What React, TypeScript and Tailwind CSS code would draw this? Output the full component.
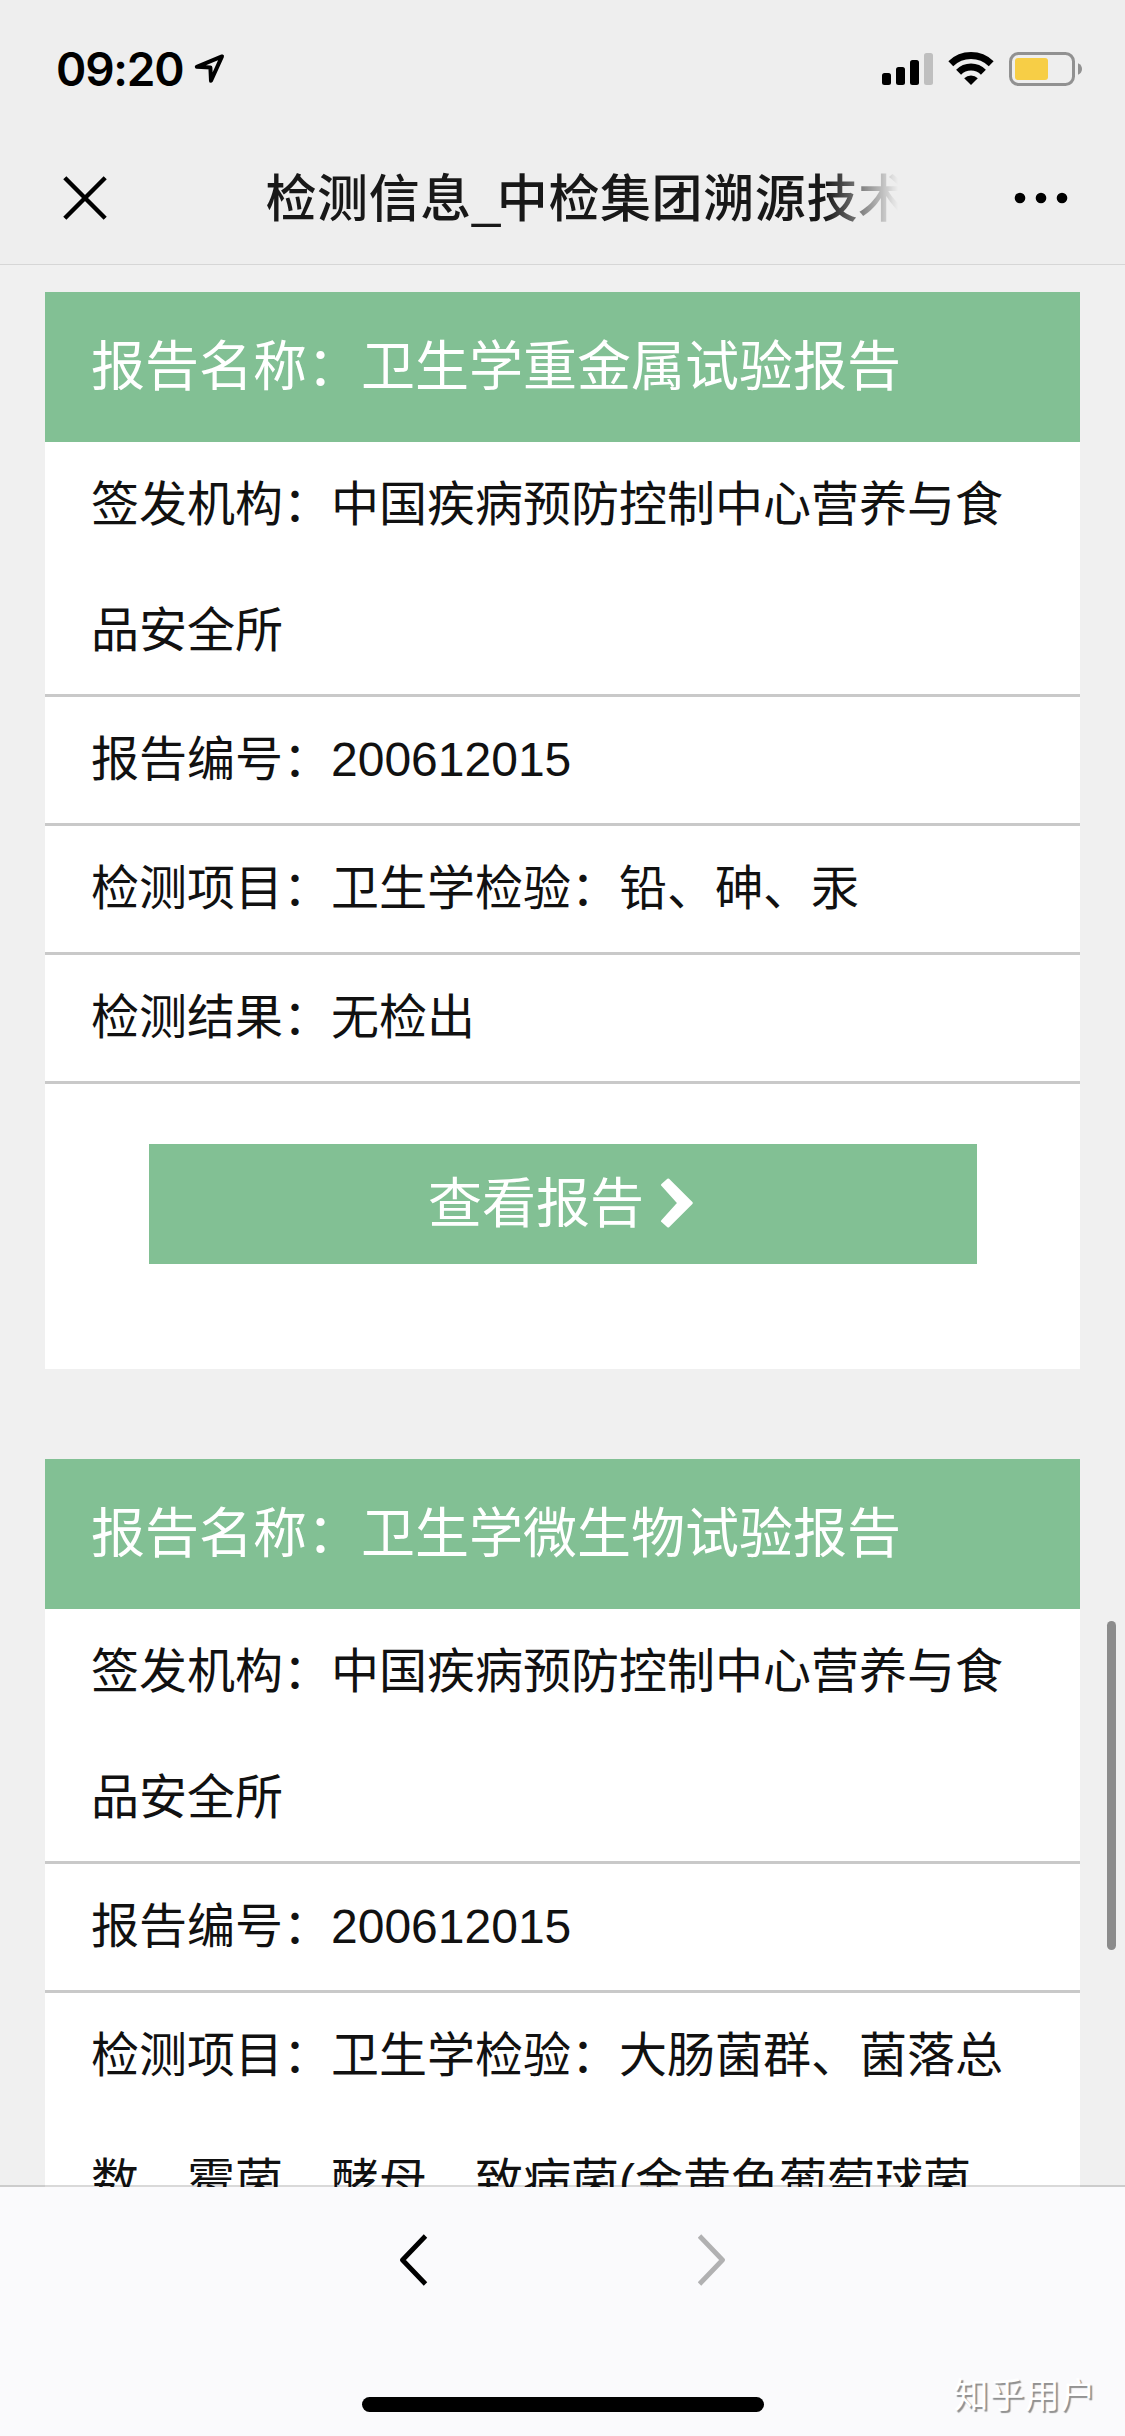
import React from 'react';

type Field = { label: string; value: string };
type Report = { name: string; fields: Field[] };

const reports: Report[] = [
  {
    name: '卫生学重金属试验报告',
    fields: [
      { label: '签发机构', value: '中国疾病预防控制中心营养与食品安全所' },
      { label: '报告编号', value: '200612015' },
      { label: '检测项目', value: '卫生学检验：铅、砷、汞' },
      { label: '检测结果', value: '无检出' },
    ],
  },
  {
    name: '卫生学微生物试验报告',
    fields: [
      { label: '签发机构', value: '中国疾病预防控制中心营养与食品安全所' },
      { label: '报告编号', value: '200612015' },
      { label: '检测项目', value: '卫生学检验：大肠菌群、菌落总数、霉菌、酵母、致病菌(金黄色葡萄球菌' },
    ],
  },
];

function StatusBar() {
  return (
    <div className="flex h-[132px] items-start justify-between pr-[43px] pl-[56px]">
      <div className="flex items-start pt-[41px]">
        <span className="w-[138px] font-['Inter'] text-[46px] leading-[56px] font-semibold tracking-[-1.2px] text-black">09:20</span>
        <svg className="mt-[12px] h-[32px] w-[32px]" viewBox="0 0 32 32" fill="none" stroke="#000" strokeWidth="4" strokeLinejoin="round">
          <path d="M28 3.4 L2.8 13.8 L16.4 14.6 L17 27.8 Z" />
        </svg>
      </div>
      <div className="flex items-start pt-[52px]">
        <svg className="h-[34px] w-[51px]" viewBox="0 0 51 34">
          <rect x="0" y="21" width="9" height="12" rx="2.5" />
          <rect x="14" y="15" width="9" height="18" rx="2.5" />
          <rect x="28" y="8" width="9" height="25" rx="2.5" />
          <rect x="42" y="1" width="9" height="32" rx="2.5" fill="#bfbfbf" />
        </svg>
        <svg className="ml-[15px] h-[34px] w-[46px]" viewBox="0 0 46 34">
          <g fill="none" stroke="#000" strokeWidth="7">
            <path d="M2.8 11.8 A29 29 0 0 1 43.2 11.8" />
            <path d="M10.6 20.2 A17.6 17.6 0 0 1 35.4 20.2" />
          </g>
          <path d="M23 33 L16.2 26.2 A9.6 9.6 0 0 1 29.8 26.2 Z" />
        </svg>
        <svg className="ml-[15px] h-[34px] w-[73px]" viewBox="0 0 73 34">
          <rect x="1.5" y="1.5" width="63" height="31" rx="8" fill="none" stroke="#919191" strokeWidth="3" />
          <rect x="6" y="6" width="33" height="22" rx="3" fill="#f7ce46" />
          <path d="M69 11.2 Q73 13 73 17 Q73 21 69 22.8 Z" fill="#919191" />
        </svg>
      </div>
    </div>
  );
}

function TitleBar() {
  return (
    <div className="flex h-[132px] items-center justify-between pr-[56px] pl-[62px]">
      <svg className="h-[46px] w-[46px]" viewBox="0 0 46 46" stroke="#000" strokeWidth="4.4">
        <path d="M2.8 2.8 L43.2 43.2 M43.2 2.8 L2.8 43.2" />
      </svg>
      <h1 className="ml-[42px] w-[632px] overflow-hidden [mask-image:linear-gradient(to_right,black_560px,transparent_632px)] pt-[3px] text-[51px] leading-[72px] font-medium tracking-[0.6px] whitespace-nowrap text-[#181818]">
        检测信息<span className="tracking-[-3.5px]">_</span>中检集团溯源技术
      </h1>
      <svg className="h-[12px] w-[56px]" viewBox="0 0 56 12">
        <circle cx="7" cy="6" r="5.3" />
        <circle cx="28" cy="6" r="5.3" />
        <circle cx="49" cy="6" r="5.3" />
      </svg>
    </div>
  );
}

function ReportCard({ report, partial }: { report: Report; partial?: boolean }) {
  return (
    <section className="mx-[45px] shrink-0 bg-white">
      <h2 className="h-[150px] bg-[#82c094] pl-[46px] text-[54px] leading-[150px] font-normal text-white">
        报告名称：{report.name}
      </h2>
      {report.fields.map((f) => (
        <p key={f.label} className="border-b-[3px] border-[#c9c9c9] pr-[44px] pl-[46px] text-[48px] leading-[126px] text-[#111]">
          {f.label}：{f.value}
        </p>
      ))}
      {!partial && (
        <div className="h-[285px] pt-[60px]">
          <button className="mx-auto flex h-[120px] w-[828px] items-center justify-center bg-[#82c094] pr-[3px] text-[54px] leading-[120px] text-white">
            查看报告
            <svg className="mb-[3px] ml-[16px] h-[50px] w-[34px]" viewBox="0 0 34 50" fill="#fff" stroke="#fff" strokeWidth="2.5" strokeLinejoin="round">
              <path d="M2.3 6.9 L8.2 1.7 L31.5 25 L8.2 48.3 L2.3 43.1 L18.5 25 Z" />
            </svg>
          </button>
        </div>
      )}
    </section>
  );
}

export default function App() {
  return (
    <div className="relative flex h-[2436px] w-[1125px] flex-col overflow-hidden bg-[#f0f0f0] font-['Liberation_Sans','Noto_Sans_CJK_SC',sans-serif]" lang="zh-CN">
      <header className="h-[265px] shrink-0 border-b border-[#d6d6d6] bg-[#eeeeee]">
        <StatusBar />
        <TitleBar />
      </header>
      <main className="flex h-[1922px] shrink-0 flex-col gap-[90px] overflow-hidden pt-[27px]">
        <ReportCard report={reports[0]} />
        <ReportCard report={reports[1]} partial />
      </main>
      <footer className="relative flex h-[249px] flex-col items-center bg-[#fafafc]">
        <div className="absolute -top-[2px] left-0 h-[2px] w-full bg-black/15" />
        <div className="flex w-full justify-center gap-[270px] pt-[46px]">
          <svg className="h-[54px] w-[28px]" viewBox="0 0 28 54" fill="none" stroke="#000" strokeWidth="4.8" strokeLinejoin="round">
            <path d="M25.5 3 L2.5 27 L25.5 51" />
          </svg>
          <svg className="h-[54px] w-[28px]" viewBox="0 0 28 54" fill="none" stroke="#b1b1b2" strokeWidth="4.8" strokeLinejoin="round">
            <path d="M1.5 3 L24.5 27 L1.5 51" />
          </svg>
        </div>
        <div className="mt-[110px] h-[15px] w-[402px] rounded-full bg-black" />
        <span className="absolute top-[183px] right-[29px] text-[35px] leading-[52px] tracking-[0.6px] text-white [text-shadow:2px_2px_1px_#8f8f8f]">知乎用户</span>
      </footer>
      <div className="absolute top-[1621px] right-[9px] h-[329px] w-[9px] rounded-full bg-[#8c8c8c]" />
    </div>
  );
}
